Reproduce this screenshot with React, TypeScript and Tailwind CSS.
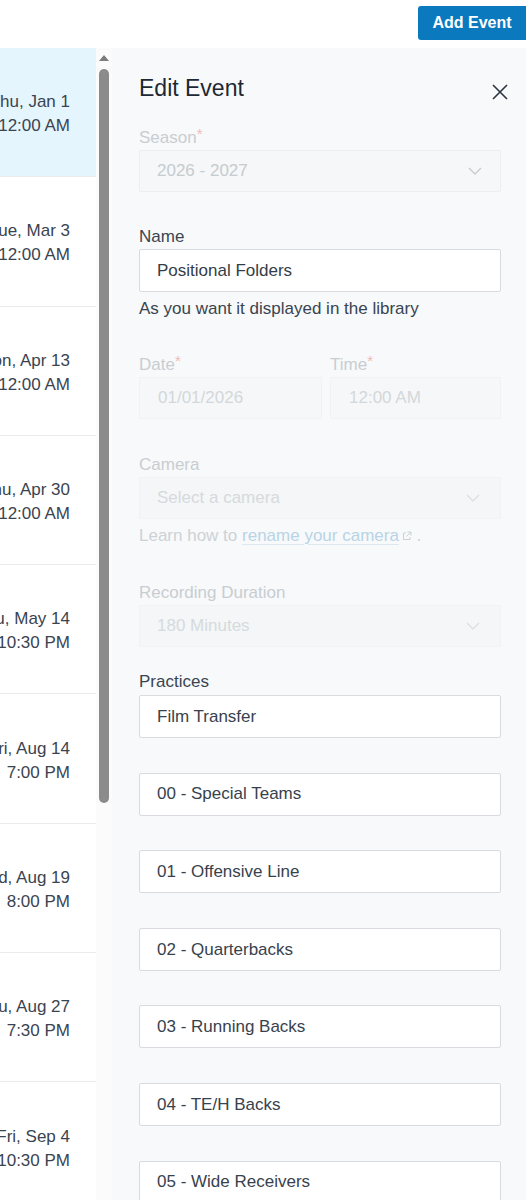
import React from "react";

const rows: { d: string; t: string; active?: boolean }[] = [
  { d: "Thu, Jan 1", t: "12:00 AM", active: true },
  { d: "Tue, Mar 3", t: "12:00 AM" },
  { d: "Mon, Apr 13", t: "12:00 AM" },
  { d: "Thu, Apr 30", t: "12:00 AM" },
  { d: "Thu, May 14", t: "10:30 PM" },
  { d: "Fri, Aug 14", t: "7:00 PM" },
  { d: "Wed, Aug 19", t: "8:00 PM" },
  { d: "Thu, Aug 27", t: "7:30 PM" },
  { d: "Fri, Sep 4", t: "10:30 PM" },
];

const practices = [
  "Film Transfer",
  "00 - Special Teams",
  "01 - Offensive Line",
  "02 - Quarterbacks",
  "03 - Running Backs",
  "04 - TE/H Backs",
  "05 - Wide Receivers",
];

function Chevron({ color }: { color: string }) {
  return (
    <svg width="14" height="8" viewBox="0 0 14 8" fill="none">
      <path d="M1 1l6 6 6-6" stroke={color} strokeWidth="1.4" />
    </svg>
  );
}

function DisabledLabel({ text, req }: { text: string; req?: boolean }) {
  return (
    <div className="h-[24px] leading-[24px] text-[17px] text-[#c9cdd2] mb-[2px]">
      <span className="relative top-[2px]">
        {text}
        {req && <span className="text-[#f1b9b9] relative top-[-4px] text-[15px]">*</span>}
      </span>
    </div>
  );
}

export default function App() {
  return (
    <div className="w-[526px] h-[1200px] overflow-hidden bg-white font-['Liberation_Sans',Arial,sans-serif]">
      <header className="h-[48px] flex justify-end pt-[6px]">
        <button className="w-[108px] h-[34px] bg-[#0b79be] text-white font-bold text-[16px] rounded-l-[3px]">
          Add Event
        </button>
      </header>
      <div className="flex h-[1152px]">
        <div className="w-[96px] shrink-0 overflow-hidden">
          {rows.map((r, i) => (
            <div
              key={i}
              className={`h-[129.3px] border-b border-[#e9ecef] flex flex-col justify-center items-end pr-[26px] pt-[4px] text-[17px] leading-[24px] text-[#3a4450] whitespace-nowrap overflow-hidden ${
                r.active ? "bg-[#e5f5fd]" : "bg-white"
              }`}
            >
              <div>{r.d}</div>
              <div>{r.t}</div>
            </div>
          ))}
        </div>
        <div className="w-[16px] shrink-0 bg-[#fbfbfb] flex flex-col items-center pt-[7px]">
          <svg width="10" height="6" viewBox="0 0 10 6" className="ml-[-1px]">
            <path d="M5 0L10 6H0z" fill="#7b7b7b" />
          </svg>
          <div className="w-[10px] h-[734px] mt-[8px] rounded-full bg-[#8b8b8b] ml-[-1px]" />
        </div>
        <div className="flex-1 bg-[#f7f9fa] pl-[27px] pr-[25px] pt-[24px]">
          <div className="flex items-center justify-between h-[32px]">
            <h2 className="text-[23px] text-[#1e2834] leading-[32px]">Edit Event</h2>
            <svg width="18" height="18" viewBox="0 0 18 18" className="mr-[-8px] mt-[8px]">
              <path d="M2 2l14 14M16 2L2 16" stroke="#2b3540" strokeWidth="1.6" />
            </svg>
          </div>

          <div className="mt-[20px]">
            <DisabledLabel text="Season" req />
            <div className="h-[42px] border border-[#eceef1] bg-[#f5f7f8] rounded-[2px] flex items-center justify-between pl-[17px] pr-[18px] text-[17px] text-[#c6cbd0]">
              <span>2026 - 2027</span>
              <Chevron color="#c8ccd1" />
            </div>
          </div>

          <div className="mt-[32px]">
            <div className="h-[24px] leading-[24px] text-[17px] text-[#3b4551] mb-[1px]">
              <span className="relative top-[1px]">Name</span>
            </div>
            <div className="h-[43px] border border-[#d8dce0] bg-white rounded-[2px] flex items-center pl-[17px] text-[17px] text-[#333d48]">
              Positional Folders
            </div>
            <div className="h-[24px] leading-[24px] text-[17px] text-[#3a4450] mt-[4px]">
              <span className="relative top-[1px]">As you want it displayed in the library</span>
            </div>
          </div>

          <div className="mt-[31px] grid grid-cols-[183px_1fr] gap-[8px]">
            <div>
              <DisabledLabel text="Date" req />
              <div className="h-[42px] border border-[#f0f2f4] bg-[#f5f7f8] rounded-[2px] flex items-center pl-[18px] text-[17px] text-[#d3d7db]">
                01/01/2026
              </div>
            </div>
            <div>
              <DisabledLabel text="Time" req />
              <div className="h-[42px] border border-[#f0f2f4] bg-[#f5f7f8] rounded-[2px] flex items-center pl-[18px] text-[17px] text-[#d3d7db]">
                12:00 AM
              </div>
            </div>
          </div>

          <div className="mt-[32px]">
            <DisabledLabel text="Camera" />
            <div className="h-[42px] border border-[#f0f2f4] bg-[#f4f6f7] rounded-[2px] flex items-center justify-between pl-[17px] pr-[20px] text-[17px] text-[#d6dade]">
              <span>Select a camera</span>
              <Chevron color="#dde0e3" />
            </div>
            <div className="h-[24px] leading-[24px] text-[17px] text-[#cdd2d6] mt-[4px] flex items-center">
              <span className="relative top-[1px] flex items-center">
                <span>Learn how to&nbsp;</span>
                <span className="text-[#b9d4e6] underline decoration-[#dde8ef] underline-offset-[3px]">rename your camera</span>
                <svg width="10" height="10" viewBox="0 0 10 10" className="ml-[3px]" fill="none">
                  <path d="M4 2H1.5v6.5H8V6M5.5 1H9v3.5M9 1L4.5 5.5" stroke="#c4d2dc" strokeWidth="1" />
                </svg>
                <span>&nbsp;.</span>
              </span>
            </div>
          </div>

          <div className="mt-[32px]">
            <DisabledLabel text="Recording Duration" />
            <div className="h-[42px] border border-[#f0f2f4] bg-[#f4f6f7] rounded-[2px] flex items-center justify-between pl-[17px] pr-[20px] text-[17px] text-[#d6dade]">
              <span>180 Minutes</span>
              <Chevron color="#dde0e3" />
            </div>
          </div>

          <div className="mt-[23px]">
            <div className="h-[24px] leading-[24px] text-[17px] text-[#3b4551] mb-[1px]">Practices</div>
            <div className="flex flex-col gap-[34.6px]">
              {practices.map((p) => (
                <div
                  key={p}
                  className="h-[43px] shrink-0 border border-[#d8dce0] bg-white rounded-[2px] flex items-center pl-[17px] text-[17px] text-[#38424d]"
                >
                  {p}
                </div>
              ))}
            </div>
          </div>
        </div>
      </div>
    </div>
  );
}
